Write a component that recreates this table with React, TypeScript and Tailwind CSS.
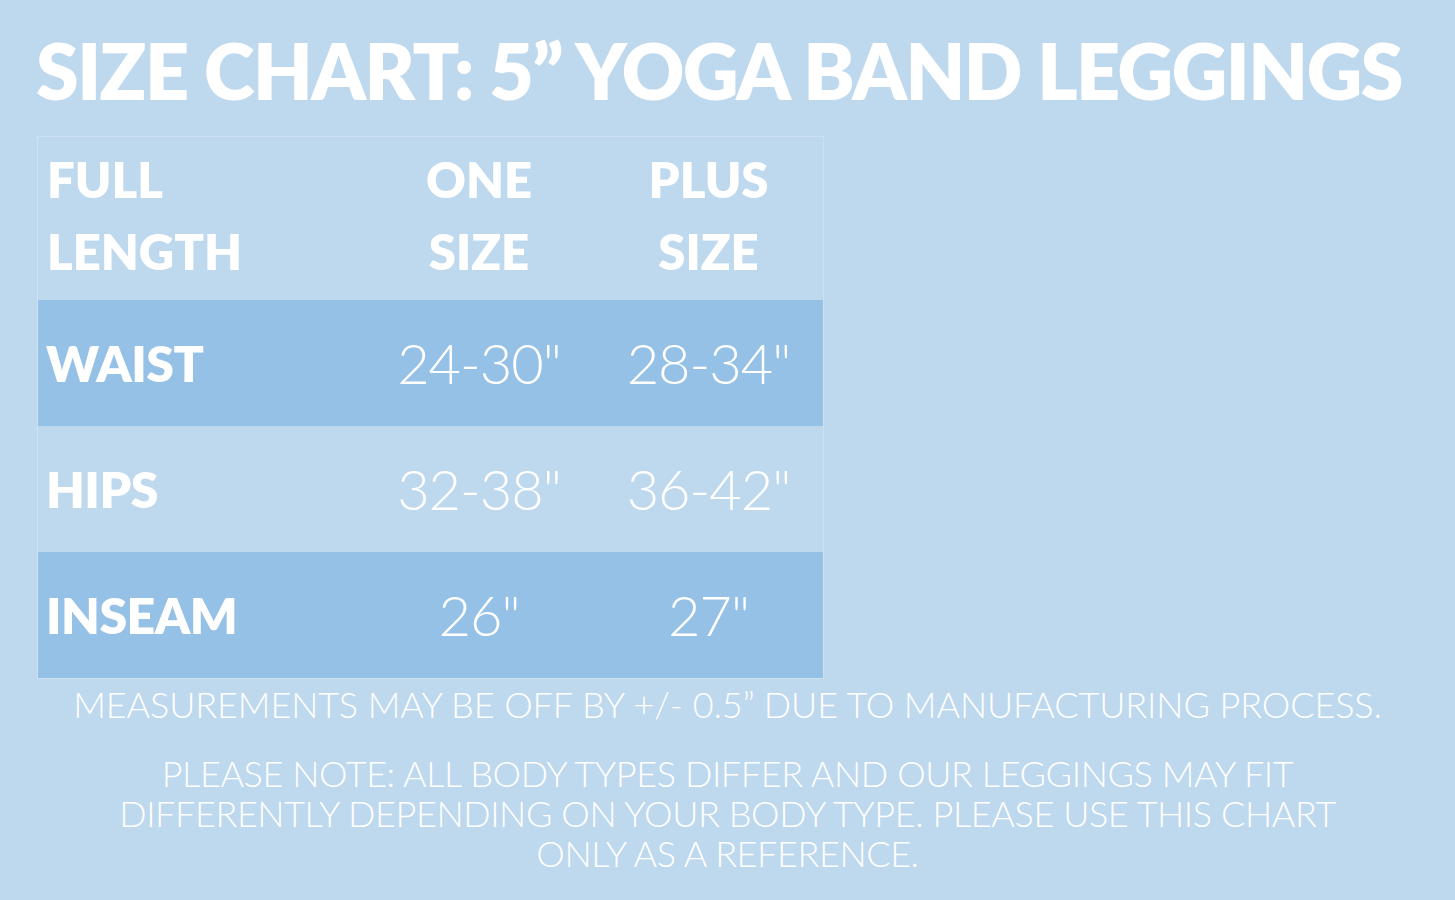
const rows = [
  { label: 'WAIST', one: '24-30"', plus: '28-34"', dark: true },
  { label: 'HIPS', one: '32-38"', plus: '36-42"', dark: false },
  { label: 'INSEAM', one: '26"', plus: '27"', dark: true },
];

const BOLD = "font-['Lato','Liberation_Sans',sans-serif] font-extrabold";
const LIGHT = "font-['Lato','Open_Sans',sans-serif] font-light";

export default function App() {
  return (
    <div className="w-[1455px] h-[900px] bg-[#bed8ee] text-white overflow-hidden">
      <h1 className={`${BOLD} pl-[36px] pt-[25px] h-[136px] text-[77px] leading-[90px] tracking-[-1.5px]`}>
        SIZE CHART: 5” YOGA BAND LEGGINGS
      </h1>

      <div className="ml-[37px] w-[787px] border border-[#cde1f3]">
        <div className="grid grid-cols-[326px_230px_1fr] h-[163px] items-center pb-[8px]">
          <div className={`${BOLD} pl-[9px] text-[49px] leading-[72px]`}>
            FULL<br />LENGTH
          </div>
          <div className={`${BOLD} text-center text-[49px] leading-[72px]`}>
            ONE<br />SIZE
          </div>
          <div className={`${BOLD} text-center text-[49px] leading-[72px]`}>
            PLUS<br />SIZE
          </div>
        </div>
        {rows.map((r) => (
          <div
            key={r.label}
            className={`grid grid-cols-[326px_230px_1fr] h-[126px] items-center ${r.dark ? 'bg-[#96c1e6]' : ''}`}
          >
            <div className={`${BOLD} pl-[8px] text-[50px] tracking-[-0.5px]`}>{r.label}</div>
            <div className={`${LIGHT} text-center text-[56px] tracking-[-1px]`}>{r.one}</div>
            <div className={`${LIGHT} text-center text-[56px] tracking-[-1px]`}>{r.plus}</div>
          </div>
        ))}
      </div>

      <div className={`${LIGHT} text-center text-[36px] leading-[40px] mt-[5px] tracking-[-0.1px]`}>
        MEASUREMENTS MAY BE OFF BY +/- 0.5” DUE TO MANUFACTURING PROCESS.
      </div>
      <div className={`${LIGHT} text-center text-[36px] leading-[40px] mt-[29px] px-[100px] tracking-[-0.4px]`}>
        PLEASE NOTE: ALL BODY TYPES DIFFER AND OUR LEGGINGS MAY FIT<br />
        DIFFERENTLY DEPENDING ON YOUR BODY TYPE. PLEASE USE THIS CHART<br />
        ONLY AS A REFERENCE.
      </div>
    </div>
  );
}
